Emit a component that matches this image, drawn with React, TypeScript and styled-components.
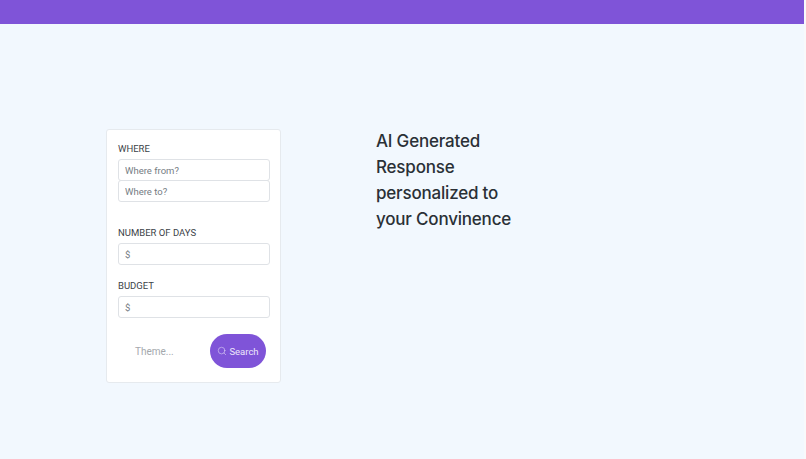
import styled, { createGlobalStyle } from 'styled-components';
import { Search as SearchIcon } from 'lucide-react';

const Global = createGlobalStyle`
  html, body {
    margin: 0;
    padding: 0;
  }
  body {
    background: #f8f9fb;
    font-family: Roboto, "Liberation Sans", sans-serif;
  }
`;

const Page = styled.div`
  width: 804px;
  height: 459px;
  overflow: hidden;
  background: #f2f8fe;
`;

const TopBar = styled.header`
  height: 24px;
  background: #7f54d8;
`;

const Main = styled.main`
  display: flex;
  align-items: flex-start;
  padding: 105px 0 0 106px;
`;

const Card = styled.form`
  width: 175px;
  height: 254px;
  box-sizing: border-box;
  padding: 12px 11px 0;
  background: #fff;
  border: 1px solid #e6eaee;
  border-radius: 3px;
`;

const Field = styled.div<{ $gap?: number }>`
  margin-bottom: ${(p) => p.$gap ?? 0}px;
`;

const Label = styled.label`
  display: block;
  height: 13px;
  margin-bottom: 4px;
  font-size: 9.5px;
  line-height: 13px;
  color: #3c4248;
`;

const Input = styled.input`
  display: block;
  width: 152px;
  height: 22px;
  box-sizing: border-box;
  padding: 0 6px;
  margin-bottom: -1px;
  background: #fff;
  border: 1px solid #dfe2e6;
  border-radius: 3px;
  font-family: inherit;
  font-size: 9.5px;
  color: #757c83;
  outline: none;

  &::placeholder {
    color: #757c83;
    opacity: 1;
  }
`;

const Stack = styled.div`
  display: flex;
  flex-direction: column;
`;

const Actions = styled.div`
  display: flex;
  align-items: center;
  justify-content: space-between;
  margin-top: 17px;
  padding: 0 3px 0 17px;
`;

const Theme = styled.span`
  font-size: 10px;
  color: #a4a8ad;
`;

const SearchButton = styled.button`
  display: flex;
  align-items: center;
  justify-content: center;
  gap: 2px;
  width: 56px;
  height: 34px;
  padding: 0;
  background: #7f54d8;
  border: none;
  border-radius: 17px;
  color: #ece6fa;
  font-family: inherit;
  font-size: 9.5px;
`;

const Headline = styled.h1`
  width: 150px;
  margin: -1px 0 0 95px;
  font-family: Inter, "Liberation Sans", sans-serif;
  font-size: 17px;
  font-weight: 500;
  letter-spacing: -0.2px;
  line-height: 26px;
  color: #2a3036;
`;

export default function App() {
  return (
    <Page>
      <Global />
      <TopBar />
      <Main>
        <Card>
          <Field $gap={25}>
            <Label>WHERE</Label>
            <Stack>
              <Input placeholder="Where from?" />
              <Input placeholder="Where to?" />
            </Stack>
          </Field>
          <Field $gap={15}>
            <Label>NUMBER OF DAYS</Label>
            <Input defaultValue="$" />
          </Field>
          <Field>
            <Label>BUDGET</Label>
            <Input defaultValue="$" />
          </Field>
          <Actions>
            <Theme>Theme...</Theme>
            <SearchButton type="button">
              <SearchIcon size={10} strokeWidth={1.25} />
              Search
            </SearchButton>
          </Actions>
        </Card>
        <Headline>AI Generated Response personalized to your Convinence</Headline>
      </Main>
    </Page>
  );
}
